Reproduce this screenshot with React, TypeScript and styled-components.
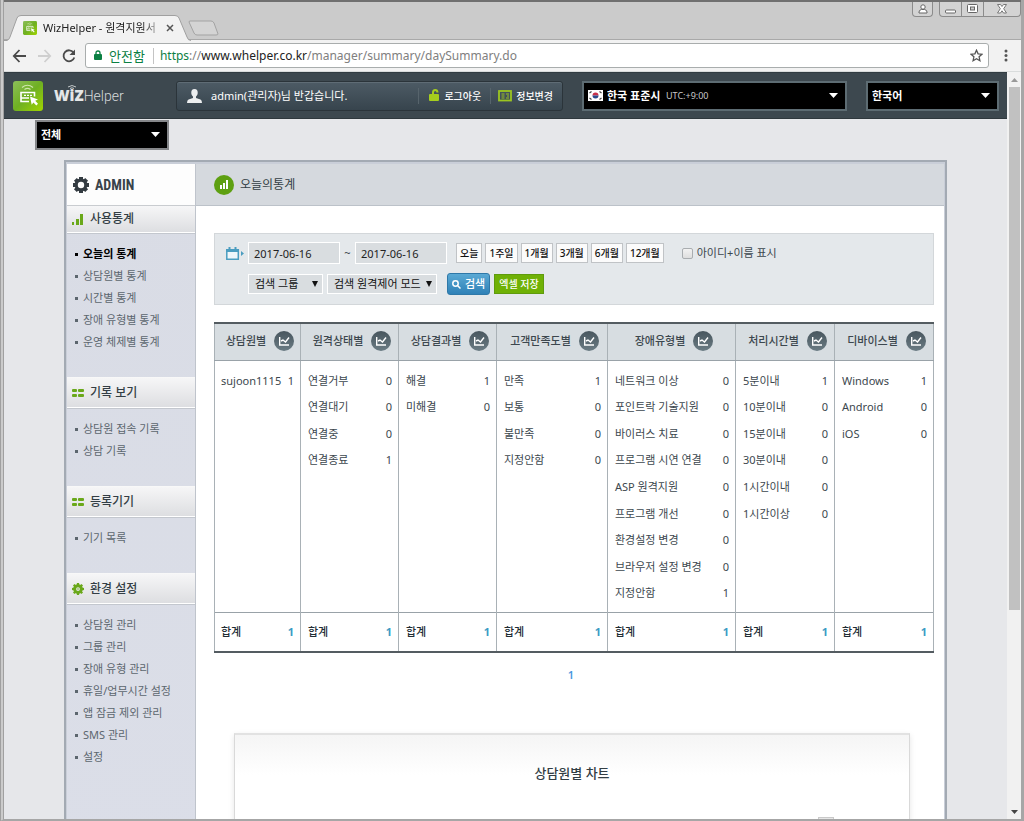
import React from "react";
import styled, { createGlobalStyle, css } from "styled-components";

const GlobalStyle = createGlobalStyle`
  * { box-sizing: border-box; }
  body {
    margin: 0;
    font-family: "Noto Sans", "Noto Sans CJK KR", sans-serif;
    font-size: 11px;
    line-height: 16px;
    color: #3c474e;
  }
  button, input, select { font: inherit; color: inherit; margin: 0; }
  ul { list-style: none; margin: 0; padding: 0; }
  a { color: inherit; text-decoration: none; }
  h1, h2, h3 { margin: 0; font-weight: inherit; font-size: inherit; }
  svg { display: block; flex: none; }
`;

/* ---------- browser window ---------- */

const Window = styled.div`
  display: flex;
  flex-direction: column;
  height: 100vh;
  overflow: hidden;
  border: solid #a6a6a6;
  border-width: 0 3px 2px 4px;
  border-left: 4px double #a0a0a0;
  background: #cbcbcb;
`;

const TitleBar = styled.div`
  display: flex;
  justify-content: space-between;
  height: 40px;
  flex: none;
  border-top: 2px solid #707070;
  border-bottom: 1px solid #a9a9a9;
  background: #cbcbcb;
`;

const TabStrip = styled.div`
  display: flex;
  align-items: flex-end;
  height: 38px;
`;

const Tab = styled.div`
  position: relative;
  display: flex;
  align-items: center;
  width: 184px;
  height: 25px;
  padding: 0 14px 0 19px;
  color: #222;
`;

const TabShape = styled.svg`
  position: absolute;
  left: 0;
  top: 0;
`;

const TabTitle = styled.span`
  position: relative;
  flex: 1;
  margin-left: 6px;
  white-space: nowrap;
  -webkit-mask-image: linear-gradient(90deg, #000 80%, transparent);
  mask-image: linear-gradient(90deg, #000 80%, transparent);
`;

const TabIcon = styled.span`
  position: relative;
`;

const BareButton = styled.button`
  position: relative;
  display: flex;
  padding: 0;
  border: 0;
  background: none;
`;

const NewTab = styled(BareButton)`
  align-self: center;
  margin-top: 13px;
`;

const Controls = styled.div`
  display: flex;
  gap: 6px;
  height: 15px;
`;

const ControlGroup = styled.div`
  display: flex;
  border: 1px solid #8b8b8b;
  border-top: 0;
  border-radius: 0 0 4px 4px;
  background: #d3d3d3;
`;

const Control = styled.button<{ $w: number }>`
  display: flex;
  align-items: center;
  justify-content: center;
  width: ${(p) => p.$w}px;
  padding: 0;
  border: 0;
  background: none;
  & + & { border-left: 1px solid #8b8b8b; }
`;

const Toolbar = styled.div`
  display: flex;
  align-items: center;
  height: 32px;
  flex: none;
  padding: 0 13px 0 8px;
  background: #f2f2f2;
  border-bottom: 1px solid #d9dcdc;
`;

const NavButtons = styled.div`
  display: flex;
  gap: 10px;
  width: 73px;
`;

const AddressBar = styled.div`
  display: flex;
  flex: 1;
  align-items: center;
  height: 25px;
  padding: 0 5px 0 8px;
  border: 1px solid #a9adad;
  border-radius: 3px;
  background: #fff;
  font-size: 12px;
`;

const Secure = styled.span`
  margin-left: 7px;
  padding-right: 8px;
  border-right: 1px solid #c4c4c4;
  font-size: 13px;
  color: #0b8043;
`;

const Url = styled.div`
  flex: 1;
  padding-left: 6px;
  color: #808080;
  white-space: nowrap;
  b { font-weight: 400; color: #222; }
  i { font-style: normal; color: #0b8043; }
`;

const MenuButton = styled(BareButton)`
  margin-left: 15px;
`;

const Viewport = styled.div`
  display: flex;
  flex: 1;
  min-height: 0;
  background: #f1f1f1;
`;

const Page = styled.div`
  flex: 1;
  min-width: 0;
  overflow: hidden;
  background: #e6e7ea;
`;

const ScrollTrack = styled.div`
  display: flex;
  flex-direction: column;
  align-items: center;
  width: 14px;
  padding: 6px 0 5px;
`;

const ScrollThumb = styled.div`
  width: 11px;
  height: 71%;
  margin: 5px 0 auto;
  background: #c1c1c1;
`;

/* ---------- application header ---------- */

const Header = styled.header`
  display: flex;
  align-items: center;
  height: 47px;
  padding: 0 8px 0 9px;
  background: #3d484f;
  border-top: 1px solid #323c42;
  border-bottom: 1px solid #2f383d;
  color: #fff;
`;

const Brand = styled.a`
  display: flex;
  align-items: center;
  flex: 0 0 163px;
  gap: 11px;
`;

const BrandName = styled.span`
  position: relative;
  display: flex;
  align-items: baseline;
  color: #d6dadc;
  font: 300 14px/20px "Roboto", sans-serif;
  b {
    font: 800 15px/20px "Open Sans", sans-serif;
    color: #e4e6e7;
  }
  svg {
    position: absolute;
    left: 13px;
    top: -1px;
  }
`;

const UserPanel = styled.div`
  display: flex;
  align-items: center;
  flex: 387 1 387px;
  height: 30px;
  padding: 0 9px 0 10px;
  border: 1px solid #2b343a;
  border-radius: 3px;
  background: linear-gradient(#4d5b65, #37444d);
  box-shadow: inset 0 1px 0 #5f6c75;
`;

const Greeting = styled.span`
  flex: 1;
  margin-left: 9px;
`;

const UserAction = styled.button`
  display: flex;
  align-items: center;
  gap: 4px;
  padding: 0 0 0 10px;
  border: 0;
  border-left: 1px solid #57646c;
  background: none;
  font-size: 10px;
  font-weight: 500;
  white-space: nowrap;
  & + & { margin-left: 9px; padding-left: 7px; }
`;

const BlackSelect = styled.label<{ $grow?: number }>`
  display: flex;
  align-items: center;
  height: 30px;
  padding: 0 7px 0 4px;
  border: 2px solid #5d6c73;
  background: #000;
  color: #fff;
  ${(p) => p.$grow && css`flex: ${p.$grow} 1 ${p.$grow}px; margin-left: 19px;`}
  select {
    appearance: none;
    padding: 0;
    border: 0;
    background: transparent;
    font-weight: 700;
  }
  small { font-size: 9px; color: #c9c9c9; margin-left: 5px; }
  svg:last-child { margin-left: auto; }
  svg:first-child { margin-right: 4px; }
`;

const ScopeBar = styled.div`
  display: flex;
  height: 41px;
  padding: 1px 0 0 31px;
  label { width: 134px; border-color: #85878a; }
`;

/* ---------- admin panel ---------- */

const Panel = styled.div`
  display: flex;
  margin: 0 60px;
  border: 1px solid #a3aab3;
  border-width: 2px 2px 0;
  padding: 2px 1px 0;
  background: #c9ced8;
`;

const Sidebar = styled.nav`
  flex: 0 0 129px;
  padding-bottom: 60px;
  background: linear-gradient(#d9dce5, #dbdee8);
  border-right: 1px solid #bfc4cc;
`;

const AdminTitle = styled.h1`
  display: flex;
  align-items: center;
  gap: 6px;
  height: 41px;
  padding-left: 6px;
  background: #fdfdfd;
  font: 700 14px/18px "Liberation Sans Narrow", "Roboto Condensed", sans-serif;
  color: #39434a;
`;

const SectionTitle = styled.h2<{ $first?: boolean }>`
  display: flex;
  align-items: center;
  gap: 6px;
  height: ${(p) => (p.$first ? 28 : 31)}px;
  padding-left: 5px;
  background: linear-gradient(#f6f6f7, #dddee1);
  border-top: 1px solid ${(p) => (p.$first ? "#c9ccd0" : "#f8f8f8")};
  border-bottom: 1px solid #fff;
  box-shadow: 0 1px 0 #c3c7ce;
  font-size: 12px;
  font-weight: 500;
  color: #333e45;
`;

const SectionList = styled.ul`
  padding: 10px 0 24px 8px;
`;

const SectionItem = styled.li<{ $active?: boolean }>`
  line-height: 22px;
  font-weight: ${(p) => (p.$active ? 700 : 400)};
  color: ${(p) => (p.$active ? "#000" : "#5c666e")};
  white-space: nowrap;
  a { display: flex; align-items: center; gap: 5px; }
  a::before { content: ""; width: 3px; height: 3px; background: currentColor; }
`;

const Content = styled.main`
  flex: 1;
  min-width: 0;
  background: #fff;
`;

const ContentTitle = styled.h2`
  display: flex;
  align-items: center;
  gap: 6px;
  height: 42px;
  padding-left: 18px;
  background: #d5d9de;
  border-bottom: 1px solid #bcc2c9;
  font-size: 12px;
  color: #333e45;
`;

const ContentBody = styled.div`
  padding: 27px 10px 0 18px;
`;

/* ---------- filters ---------- */

const Filters = styled.form`
  display: flex;
  flex-direction: column;
  gap: 9px;
  height: 72px;
  padding: 8px 11px;
  border: 1px solid #d3d7da;
  background: #e4e8eb;
`;

const FilterRow = styled.div<{ $indent?: boolean }>`
  display: flex;
  align-items: center;
  gap: 4px;
  padding-left: ${(p) => (p.$indent ? 22 : 0)}px;
  white-space: nowrap;
`;

const DateInput = styled.input`
  width: 92px;
  height: 22px;
  padding: 0 5px;
  border: 1px solid #fff;
  background: #d9dde0;
  color: #222;
`;

const Tilde = styled.span`
  width: 7px;
  text-align: center;
`;

const PeriodButtons = styled.div`
  display: flex;
  gap: 3px;
  margin-left: 5px;
`;

const PeriodButton = styled.button`
  height: 20px;
  padding: 0 3px;
  border: 1px solid #c0c3c6;
  background: #fbfbfb;
  font-size: 10px;
  font-weight: 500;
  line-height: 16px;
  color: #111;
`;

const CheckLabel = styled.label`
  display: flex;
  align-items: center;
  gap: 4px;
  margin-left: 14px;
  input {
    appearance: none;
    width: 11px;
    height: 11px;
    border: 1px solid #a9adb0;
    border-radius: 2px;
    background: linear-gradient(#f2f2f2, #dedede);
  }
`;

const FilterSelect = styled.label<{ $w: number }>`
  display: flex;
  align-items: center;
  width: ${(p) => p.$w}px;
  height: 20px;
  padding: 0 4px 0 6px;
  border: 1px solid #fff;
  background: #d9dde0;
  color: #111;
  select {
    flex: 1;
    min-width: 0;
    appearance: none;
    padding: 0;
    border: 0;
    background: transparent;
  }
`;

const ActionButton = styled.button<{ $green?: boolean }>`
  display: flex;
  align-items: center;
  gap: 4px;
  height: ${(p) => (p.$green ? 20 : 22)}px;
  padding: 0 4px;
  border: 1px solid ${(p) => (p.$green ? "#5f9b0d" : "#2f78a8")};
  border-radius: ${(p) => (p.$green ? 0 : 3)}px;
  background: ${(p) => (p.$green ? "#6fb105" : "linear-gradient(#5aa9d4, #2f81b7)")};
  color: #fff;
  font-size: ${(p) => (p.$green ? 10 : 11)}px;
  font-weight: 500;
  margin-left: ${(p) => (p.$green ? 0 : 6)}px;
`;

/* ---------- statistics table ---------- */

const StatTable = styled.table`
  width: 100%;
  margin-top: 17px;
  table-layout: fixed;
  border-collapse: collapse;
  border-top: 2px solid #545c61;
  border-bottom: 2px solid #545c61;
  th, td { padding: 0 6px 0 7px; border-left: 1px solid #a9b1b6; border-right: 1px solid #a9b1b6; }
  thead th { height: 37px; padding: 0 0 1px 5px; background: #d7dde1; font-weight: 500; border-bottom: 1px solid #99a2a8; }
  tbody td { height: 252px; padding-top: 7px; vertical-align: top; }
  tfoot td { height: 40px; border-top: 1px solid #99a2a8; }
  td:first-child { padding-left: 6px; }
`;

const HeadCell = styled.div`
  display: flex;
  align-items: center;
  justify-content: center;
  gap: 8px;
  white-space: nowrap;
`;

const CountList = styled.ul`
  display: grid;
  grid-template-rows: repeat(9, 1fr);
  height: 239px;
`;

const CountRow = styled.li`
  display: flex;
  align-items: center;
  justify-content: space-between;
  white-space: nowrap;
`;

const TotalRow = styled.div`
  display: flex;
  justify-content: space-between;
  font-weight: 500;
  color: #222d35;
  b { color: #3d9bc4; }
`;

const Pager = styled.div`
  display: flex;
  justify-content: center;
  padding: 14px 6px 0 0;
  font-weight: 600;
  color: #4a97e0;
`;

const ChartCard = styled.section`
  margin: 50px 24px 0 20px;
  border: 1px solid #d9d9d9;
  border-top: 2px solid #e2e2e2;
  box-shadow: 0 2px 6px rgba(0, 0, 0, 0.1);
  background: linear-gradient(#f5f5f5, #fff 40px);
  padding: 27px 75px 40px;
  h3 {
    text-align: center;
    font-size: 13px;
    line-height: 22px;
    font-weight: 500;
    color: #333e45;
  }
`;

const ChartMenu = styled.button`
  display: block;
  width: 16px;
  height: 14px;
  margin: 33px 0 0 auto;
  padding: 0;
  border: 1px solid #c9c9c9;
  background: #e6e6e6;
`;

/* ---------- icons ---------- */

const LogoMark = ({ size = 30 }: { size?: number }) => (
  <svg width={size} height={size} viewBox="0 0 30 30">
    <defs>
      <linearGradient id="mark" x1="0" y1="0" x2="1" y2="1">
        <stop offset="0" stopColor="#8cbf5a" />
        <stop offset=".5" stopColor="#6fb022" />
        <stop offset="1" stopColor="#a0d400" />
      </linearGradient>
    </defs>
    <rect width="30" height="30" rx="3" fill="url(#mark)" />
    <path d="M9 6.500Q14.500 2 20 6.500M11.500 8.500Q14.500 6.300 17.500 8.500" fill="none" stroke="#cfe6ac" strokeWidth="1.200" />
    <path d="M16 20.500H8V11.500H21.500V15.500M8 17H16" fill="none" stroke="#fff" strokeWidth="1.600" />
    <path d="M11 14.300h2M14 14.300h2M17 14.300h2" stroke="#fff" strokeWidth="1.200" />
    <path d="M17 15.500l8 3-2.800 1.300 2.800 3-1.700 1.600-2.900-3-1.700 2.300z" fill="#fff" />
  </svg>
);

const Caret = () => (
  <svg width="9" height="6" viewBox="0 0 9 6"><path d="M0 0h9L4.500 5z" fill="#fff" /></svg>
);

const BlackCaret = () => (
  <svg width="6" height="6" viewBox="0 0 6 6"><path d="M0 0h6L3 6z" fill="#111" /></svg>
);

const Flag = () => (
  <svg width="15" height="11" viewBox="0 0 15 11">
    <rect width="15" height="11" fill="#fff" />
    <path d="M4.500 5.500a3 3 0 0 1 6 0z" fill="#c9304a" />
    <path d="M4.500 5.500a3 3 0 0 0 6 0z" fill="#2b4a8c" />
    <path d="M1.500 3l2-1.500M11.500 1.500l2 1.500M1.500 8l2 1.500M11.500 9.500l2-1.500" stroke="#444" strokeWidth="1.200" />
  </svg>
);

const Bars = () => (
  <svg width="12" height="13" viewBox="0 0 12 13" fill="#6aa81a">
    <rect x="0" y="9" width="2" height="3" /><rect x="4" y="6" width="3" height="6" /><rect x="8" y="1" width="3" height="11" />
  </svg>
);

const Blocks = () => (
  <svg width="12" height="8" viewBox="0 0 12 8" fill="#6aa81a">
    <rect width="5" height="3" rx="1" /><rect x="6" width="6" height="3" rx="1" />
    <rect y="5" width="5" height="3" rx="1" /><rect x="6" y="5" width="6" height="3" rx="1" />
  </svg>
);

const Gear = ({ size, color, teeth, width, hole }: { size: number; color: string; teeth: number; width: number; hole: number }) => (
  <svg width={size} height={size} viewBox="0 0 16 16">
    {Array.from({ length: teeth }, (_, i) => (
      <rect key={i} x={8 - width / 2} y="0" width={width} height="4" fill={color} transform={`rotate(${(i * 360) / teeth} 8 8)`} />
    ))}
    <circle cx="8" cy="8" r={(hole + 6.5) / 2} fill="none" stroke={color} strokeWidth={6.5 - hole} />
    {hole < 3 && <circle cx="8" cy="8" r="1" fill={color} />}
  </svg>
);

const TitleBadge = () => (
  <svg width="20" height="20" viewBox="0 0 20 20">
    <circle cx="10" cy="10" r="10" fill="#5ea011" />
    <path d="M6 10h2v4H6zM9 8h2v6H9zM12 5h2v9h-2z" fill="#fff" />
  </svg>
);

const ChartBadge = () => (
  <svg width="20" height="20" viewBox="0 0 20 20">
    <defs>
      <linearGradient id="badge" x1="0" y1="0" x2="0" y2="1">
        <stop offset="0" stopColor="#48565e" />
        <stop offset="1" stopColor="#6b7c84" />
      </linearGradient>
    </defs>
    <circle cx="10" cy="10" r="10" fill="url(#badge)" />
    <path d="M5.700 6v8H15" fill="none" stroke="#fff" strokeWidth="1.400" />
    <path d="M7 10l2-1 2.500 2L15 6.500" fill="none" stroke="#fff" strokeWidth="1.400" />
  </svg>
);

const Calendar = () => (
  <svg width="18" height="13" viewBox="0 0 18 13">
    <path d="M.8 2.800h11.500v9.400H.8z" fill="#eef6fa" stroke="#4b9dc0" strokeWidth="1.500" />
    <path d="M0 2h13v3H0zM2.500 0h2v3h-2zM8.500 0h2v3h-2z" fill="#4b9dc0" />
    <path d="M15 4l3 2.500L15 9z" fill="#4b9dc0" />
  </svg>
);

const Person = () => (
  <svg width="15" height="14" viewBox="0 0 15 14" fill="#eceeef">
    <path d="M7.500 0C5 0 4 2 4.300 4.300 4.500 6 5.300 7 6 7.600V9L1.500 10.600Q0 11.300 0 14h15q0-2.700-1.500-3.400L9 9V7.600c.7-.6 1.500-1.600 1.700-3.300C11 2 10 0 7.500 0z" />
  </svg>
);

const OpenLock = () => (
  <svg width="11" height="13" viewBox="0 0 11 13">
    <path d="M4 6V3.500Q4 1 6.200 1T8.500 3.500" fill="none" stroke="#a6ce1e" strokeWidth="2" />
    <rect y="5" width="10" height="7" rx="1" fill="#a6ce1e" />
  </svg>
);

const IdCard = () => (
  <svg width="14" height="12" viewBox="0 0 14 12">
    <rect x="1" y="1" width="12" height="9.500" fill="none" stroke="#9cc521" strokeWidth="1.800" />
    <path d="M3.500 4h3M3.500 6h3M3.500 8h3M8 4h3M9 6h2M8 8h3" stroke="#9cc521" strokeWidth="1" />
  </svg>
);

/* ---------- data ---------- */

const sections = [
  { title: "사용통계", icon: <Bars />, items: ["오늘의 통계", "상담원별 통계", "시간별 통계", "장애 유형별 통계", "운영 체제별 통계"] },
  { title: "기록 보기", icon: <Blocks />, items: ["상담원 접속 기록", "상담 기록"] },
  { title: "등록기기", icon: <Blocks />, items: ["기기 목록"] },
  {
    title: "환경 설정",
    icon: <Gear size={12} color="#6aa81a" teeth={8} width={3} hole={2.5} />,
    items: ["상담원 관리", "그룹 관리", "장애 유형 관리", "휴일/업무시간 설정", "앱 잠금 제외 관리", "SMS 관리", "설정"],
  },
];

const periods = ["오늘", "1주일", "1개월", "3개월", "6개월", "12개월"];

type Column = { name: string; width: number; rows: [string, number][] };

const columns: Column[] = [
  { name: "상담원별", width: 86, rows: [["sujoon1115", 1]] },
  { name: "원격상태별", width: 98, rows: [["연결거부", 0], ["연결대기", 0], ["연결중", 0], ["연결종료", 1]] },
  { name: "상담결과별", width: 98, rows: [["해결", 1], ["미해결", 0]] },
  { name: "고객만족도별", width: 111, rows: [["만족", 1], ["보통", 0], ["불만족", 0], ["지정안함", 0]] },
  {
    name: "장애유형별",
    width: 128,
    rows: [
      ["네트워크 이상", 0], ["포인트락 기술지원", 0], ["바이러스 치료", 0], ["프로그램 시연 연결", 0], ["ASP 원격지원", 0],
      ["프로그램 개선", 0], ["환경설정 변경", 0], ["브라우저 설정 변경", 0], ["지정안함", 1],
    ],
  },
  { name: "처리시간별", width: 99, rows: [["5분이내", 1], ["10분이내", 0], ["15분이내", 0], ["30분이내", 0], ["1시간이내", 0], ["1시간이상", 0]] },
  { name: "디바이스별", width: 99, rows: [["Windows", 1], ["Android", 0], ["iOS", 0]] },
];

/* ---------- page ---------- */

const BrowserChrome = () => (
  <>
    <TitleBar>
      <TabStrip>
        <Tab>
          <TabShape width="188" height="26" viewBox="0 0 188 26">
            <path d="M0 25.500H3Q5 25 6 22L13 3Q14 .5 17 .5H171Q174 .5 175 3L183 22Q184 25.500 187 25.500" fill="#f2f2f2" stroke="#a0a0a0" />
          </TabShape>
          <TabIcon><LogoMark size={14} /></TabIcon>
          <TabTitle>WizHelper - 원격지원서</TabTitle>
          <BareButton type="button" aria-label="탭 닫기">
            <svg width="8" height="8" viewBox="0 0 8 8"><path d="M1 1l6 6M7 1L1 7" stroke="#555" strokeWidth="1.500" /></svg>
          </BareButton>
        </Tab>
        <NewTab type="button" aria-label="새 탭">
          <svg width="32" height="16" viewBox="0 0 32 16">
            <path d="M1.500 1H23Q25 1 26 3L30 14Q30 15 28 15H9Q7 15 6 13L1 2Z" fill="#d4d4d4" stroke="#a3a3a3" />
          </svg>
        </NewTab>
      </TabStrip>
      <Controls>
        <ControlGroup>
          <Control type="button" $w={19} aria-label="사용자">
            <svg width="10" height="10" viewBox="0 0 10 10" fill="#fff" stroke="#666"><circle cx="5" cy="3" r="2.200" /><path d="M1 9V8q0-2 2.500-2.500h3Q9 6 9 8v1z" /></svg>
          </Control>
        </ControlGroup>
        <ControlGroup>
          <Control type="button" $w={21} aria-label="최소화">
            <svg width="11" height="10" viewBox="0 0 11 10"><rect x=".5" y="6" width="10" height="3" rx="1" fill="#fff" stroke="#666" /></svg>
          </Control>
          <Control type="button" $w={22} aria-label="최대화">
            <svg width="11" height="10" viewBox="0 0 11 10" fill="#fff" stroke="#666"><rect x=".5" y=".5" width="10" height="8" rx="1" /><rect x="3.500" y="3" width="4" height="3" fill="#ccc" /></svg>
          </Control>
          <Control type="button" $w={37} aria-label="닫기">
            <svg width="10" height="10" viewBox="0 0 10 10" fill="#fff" stroke="#777"><path d="M.5.5H3.500L5 2.500 6.500.5h3L6.700 4.700 9.500 9h-3L5 6.800 3.500 9h-3L3.300 4.700z" /></svg>
          </Control>
        </ControlGroup>
      </Controls>
    </TitleBar>
    <Toolbar>
      <NavButtons>
        <BareButton type="button" aria-label="뒤로">
          <svg width="15" height="14" viewBox="0 0 15 14" fill="none" stroke="#4a4a4a" strokeWidth="1.800"><path d="M14 7H2M7.500 1L1.800 7l5.700 6" /></svg>
        </BareButton>
        <BareButton type="button" aria-label="앞으로">
          <svg width="15" height="14" viewBox="0 0 15 14" fill="none" stroke="#cfcfcf" strokeWidth="1.800"><path d="M1 7h12M7.500 1l5.700 6-5.700 6" /></svg>
        </BareButton>
        <BareButton type="button" aria-label="새로고침">
          <svg width="14" height="14" viewBox="0 0 14 14"><path d="M11.500 3.500A5.500 5.500 0 1 0 12.300 8.500" fill="none" stroke="#4a4a4a" strokeWidth="1.800" /><path d="M13 .5V6H7.500z" fill="#4a4a4a" /></svg>
        </BareButton>
      </NavButtons>
      <AddressBar>
        <svg width="8" height="11" viewBox="0 0 8 11"><path d="M2 5V3q0-2 2-2t2 2v2" fill="none" stroke="#0b8043" strokeWidth="1.300" /><rect y="4" width="8" height="6" rx="1" fill="#0b8043" /></svg>
        <Secure>안전함</Secure>
        <Url><i>https</i>://<b>www.whelper.co.kr</b>/manager/summary/daySummary.do</Url>
        <BareButton type="button" aria-label="북마크">
          <svg width="13" height="13" viewBox="0 0 13 13"><path d="M6.500 1.200l1.600 3.600 3.900.4-2.900 2.600.8 3.900-3.400-2-3.400 2 .8-3.900L1 5.200l3.900-.4z" fill="none" stroke="#555" strokeWidth="1.300" /></svg>
        </BareButton>
      </AddressBar>
      <MenuButton type="button" aria-label="메뉴">
        <svg width="4" height="13" viewBox="0 0 4 13" fill="#555"><circle cx="2" cy="2" r="1.500" /><circle cx="2" cy="6.500" r="1.500" /><circle cx="2" cy="11" r="1.500" /></svg>
      </MenuButton>
    </Toolbar>
  </>
);

const AppHeader = () => (
  <Header>
    <Brand href="#">
      <LogoMark />
      <BrandName>
        <b>WiZ</b>Helper
        <svg width="10" height="5" viewBox="0 0 10 5" fill="none" stroke="#c3c8ca"><path d="M1 3Q5 0 9 3M3 4.500Q5 3 7 4.500" /></svg>
      </BrandName>
    </Brand>
    <UserPanel>
      <Person />
      <Greeting>admin(관리자)님 반갑습니다.</Greeting>
      <UserAction type="button"><OpenLock />로그아웃</UserAction>
      <UserAction type="button"><IdCard />정보변경</UserAction>
    </UserPanel>
    <BlackSelect $grow={265}>
      <Flag />
      <select aria-label="시간대"><option>한국 표준시</option></select>
      <small>UTC:+9:00</small>
      <Caret />
    </BlackSelect>
    <BlackSelect $grow={133}>
      <select aria-label="언어"><option>한국어</option></select>
      <Caret />
    </BlackSelect>
  </Header>
);

const SideMenu = () => (
  <Sidebar>
    <AdminTitle><Gear size={16} color="#333b41" teeth={8} width={4} hole={3.2} />ADMIN</AdminTitle>
    {sections.map((s, i) => (
      <React.Fragment key={s.title}>
        <SectionTitle $first={i === 0}>{s.icon}{s.title}</SectionTitle>
        <SectionList>
          {s.items.map((item, j) => (
            <SectionItem key={item} $active={i === 0 && j === 0}><a href="#">{item}</a></SectionItem>
          ))}
        </SectionList>
      </React.Fragment>
    ))}
  </Sidebar>
);

const SearchFilters = () => (
  <Filters onSubmit={(e) => e.preventDefault()}>
    <FilterRow>
      <Calendar />
      <DateInput aria-label="시작일" defaultValue="2017-06-16" />
      <Tilde>~</Tilde>
      <DateInput aria-label="종료일" defaultValue="2017-06-16" />
      <PeriodButtons>
        {periods.map((p) => <PeriodButton key={p} type="button">{p}</PeriodButton>)}
      </PeriodButtons>
      <CheckLabel><input type="checkbox" />아이디+이름 표시</CheckLabel>
    </FilterRow>
    <FilterRow $indent>
      <FilterSelect $w={75}>
        <select aria-label="그룹"><option>검색 그룹</option></select>
        <BlackCaret />
      </FilterSelect>
      <FilterSelect $w={110}>
        <select aria-label="원격제어 모드"><option>검색 원격제어 모드</option></select>
        <BlackCaret />
      </FilterSelect>
      <ActionButton type="submit">
        <svg width="9" height="9" viewBox="0 0 9 9" fill="none" stroke="#fff" strokeWidth="1.500"><circle cx="3.500" cy="3.500" r="2.700" /><path d="M5.500 5.500L8.500 8.500" /></svg>
        검색
      </ActionButton>
      <ActionButton type="button" $green>엑셀 저장</ActionButton>
    </FilterRow>
  </Filters>
);

const Statistics = () => (
  <StatTable>
    <colgroup>{columns.map((c) => <col key={c.name} style={{ width: c.width }} />)}</colgroup>
    <thead>
      <tr>{columns.map((c) => <th key={c.name} scope="col"><HeadCell>{c.name}<ChartBadge /></HeadCell></th>)}</tr>
    </thead>
    <tbody>
      <tr>
        {columns.map((c) => (
          <td key={c.name}>
            <CountList>
              {c.rows.map(([label, n]) => <CountRow key={label}><span>{label}</span><span>{n}</span></CountRow>)}
            </CountList>
          </td>
        ))}
      </tr>
    </tbody>
    <tfoot>
      <tr>{columns.map((c) => <td key={c.name}><TotalRow><span>합계</span><b>1</b></TotalRow></td>)}</tr>
    </tfoot>
  </StatTable>
);

export default function App() {
  return (
    <>
      <GlobalStyle />
      <Window>
        <BrowserChrome />
        <Viewport>
          <Page>
            <AppHeader />
            <ScopeBar>
              <BlackSelect>
                <select aria-label="범위"><option>전체</option></select>
                <Caret />
              </BlackSelect>
            </ScopeBar>
            <Panel>
              <SideMenu />
              <Content>
                <ContentTitle><TitleBadge />오늘의통계</ContentTitle>
                <ContentBody>
                  <SearchFilters />
                  <Statistics />
                  <Pager><a href="#">1</a></Pager>
                  <ChartCard>
                    <h3>상담원별 차트</h3>
                    <ChartMenu type="button" aria-label="차트 메뉴" />
                  </ChartCard>
                </ContentBody>
              </Content>
            </Panel>
          </Page>
          <ScrollTrack>
            <svg width="7" height="4" viewBox="0 0 7 4"><path d="M0 4L3.500 0 7 4z" fill="#999" /></svg>
            <ScrollThumb />
            <svg width="7" height="4" viewBox="0 0 7 4"><path d="M0 0h7L3.500 4z" fill="#444" /></svg>
          </ScrollTrack>
        </Viewport>
      </Window>
    </>
  );
}
